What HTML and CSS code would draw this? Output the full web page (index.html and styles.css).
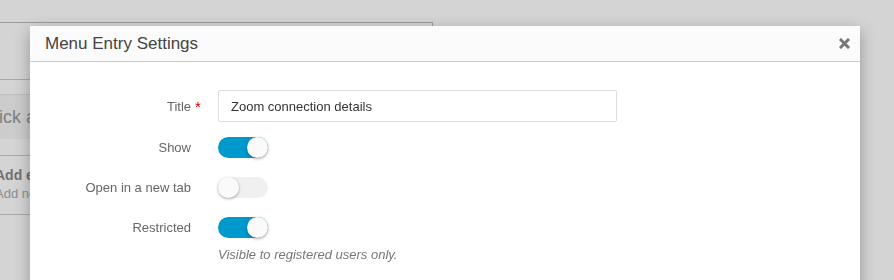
FILE: index.html
```html
<!doctype html>
<html lang="en">
 <head>
  <meta charset="UTF-8">
  <meta name="viewport" content="width=device-width, initial-scale=1.0">
  <title>Menu Entry Settings</title>
  <link rel="stylesheet" href="styles.css">
 </head>
 <body>
  <div class="page">
   <div class="panel">
    <div class="panel-head"></div>
    <div class="search-box">Click a button</div>
    <div class="add-entry">
     <strong>Add entry</strong>
     <span>Add new menu entry</span>
    </div>
   </div>
  </div>

  <div class="backdrop"></div>

  <div class="modal">
   <div class="modal-header">
    <h2>Menu Entry Settings</h2>
    <button type="button" class="close" aria-label="Close">
     <svg width="11" height="11" viewBox="0 0 11 11"><path d="M2 2 L9 9 M9 2 L2 9" stroke="#777" stroke-width="3" stroke-linecap="square"/></svg>
    </button>
   </div>
   <form class="modal-body">
    <div class="form-row">
     <label for="entryTitle">Title <span class="req">*</span></label>
     <input type="text" id="entryTitle" value="Zoom connection details">
    </div>
    <div class="form-row">
     <label>Show</label>
     <span class="toggle on"><span class="knob"></span></span>
    </div>
    <div class="form-row">
     <label>Open in a new tab</label>
     <span class="toggle"><span class="knob"></span></span>
    </div>
    <div class="form-row">
     <label>Restricted</label>
     <span class="toggle on"><span class="knob"></span></span>
    </div>
    <div class="form-row help-row">
     <p class="help">Visible to registered users only.</p>
    </div>
   </form>
  </div>
 </body>
</html>
```

FILE: styles.css
```css
body {
  font-family: "Liberation Sans", Arial, sans-serif;
  margin: 0;
  padding: 0;
  background-color: #fff;
  color: #333;
  overflow: hidden;
  height: 280px;
}
.page {
  padding-top: 22px;
}
.panel {
  width: 462px;
  margin-left: -30px;
  border-top: 1px solid #bbb;
  border-right: 1px solid #bbb;
}
.panel-head {
  height: 56px;
  border-bottom: 1px solid #ccc;
}
.search-box {
  margin-top: 14px;
  height: 44px;
  padding: 0 12px;
  line-height: 44px;
  font-size: 18px;
  color: #999;
  background-color: #f6f6f6;
  border-top: 1px solid #e6e6e6;
}
.add-entry {
  margin-top: 16px;
  border-top: 1px solid #ccc;
  border-bottom: 1px solid #ccc;
  padding: 11px 14px 13px 25px;
  display: flex;
  flex-direction: column;
  gap: 3px;
  font-size: 14px;
  color: #888;
}
.add-entry span {
  font-size: 13px;
  color: #aaa;
}
.backdrop {
  position: fixed;
  top: 0;
  left: 0;
  right: 0;
  bottom: 0;
  background-color: rgba(0, 0, 0, 0.17);
}
.modal {
  position: absolute;
  top: 26px;
  left: 30px;
  width: 830px;
  height: 320px;
  background-color: #fff;
  box-shadow: 0 5px 15px rgba(0, 0, 0, 0.3);
}
.modal-header {
  display: flex;
  align-items: center;
  justify-content: space-between;
  height: 35px;
  padding: 0 10px 0 15px;
  background-color: #fbfbfb;
  border-bottom: 1px solid #ccc;
}
.modal-header h2 {
  margin: 0;
  font-size: 17px;
  font-weight: normal;
  color: #444;
}
.close {
  border: 0;
  padding: 0;
  background: none;
  display: flex;
  cursor: pointer;
}
.modal-body {
  margin: 0;
  padding: 28px 0 0;
  display: flex;
  flex-direction: column;
  gap: 11px;
}
.form-row {
  display: flex;
  align-items: center;
  gap: 27px;
  font-size: 13px;
}
.form-row label {
  position: relative;
  width: 161px;
  text-align: right;
  color: #666;
}
.req {
  position: absolute;
  left: calc(100% + 4px);
  top: -1px;
  font-size: 15px;
  color: #c00;
}
.form-row input {
  width: 399px;
  height: 32px;
  box-sizing: border-box;
  padding: 0 12px;
  border: 1px solid #ddd;
  border-radius: 2px;
  font-family: inherit;
  font-size: 13px;
  color: #333;
}
.toggle {
  position: relative;
  display: block;
  width: 50px;
  height: 21px;
  margin: 4px 0;
  border-radius: 11px;
  background-color: #f0f0f0;
}
.toggle.on {
  background-color: #0099cc;
}
.knob {
  position: absolute;
  top: 0;
  left: 0;
  width: 21px;
  height: 21px;
  border-radius: 50%;
  background-color: #fafafa;
  box-shadow: 0 1px 3px rgba(0, 0, 0, 0.35);
}
.toggle.on .knob {
  left: 29px;
}
.help-row {
  padding-left: 188px;
}
.help {
  margin: -6px 0 0;
  font-style: italic;
  color: #777;
}
```
